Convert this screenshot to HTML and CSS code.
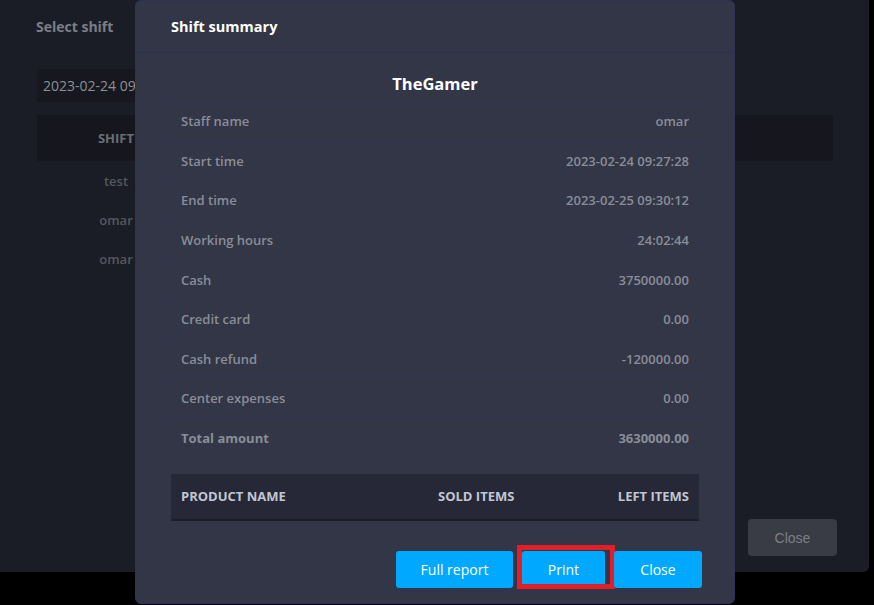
FILE: index.html
```html
<!DOCTYPE html>
<html>
<head>
<meta charset="utf-8">
<link rel="stylesheet" href="styles.css">
</head>
<body>
<div class="page">
  <div class="bg-modal">
    <div class="bg-header">Select shift</div>
    <div class="bg-body">
      <div class="date-input">2023-02-24 09:27:28</div>
      <div class="shift-table">
        <div class="shift-head"><span class="shift-col">SHIFT</span></div>
        <div class="shift-row"><span class="shift-col">test</span></div>
        <div class="shift-row"><span class="shift-col">omar</span></div>
        <div class="shift-row"><span class="shift-col">omar</span></div>
      </div>
    </div>
    <div class="bg-footer"><button class="bg-close">Close</button></div>
  </div>

  <div class="modal">
    <div class="modal-header">Shift summary</div>
    <div class="modal-body">
      <div class="center-name">TheGamer</div>
      <div class="row"><span>Staff name</span><span>omar</span></div>
      <div class="row"><span>Start time</span><span>2023-02-24 09:27:28</span></div>
      <div class="row"><span>End time</span><span>2023-02-25 09:30:12</span></div>
      <div class="row"><span>Working hours</span><span>24:02:44</span></div>
      <div class="row"><span>Cash</span><span>3750000.00</span></div>
      <div class="row"><span>Credit card</span><span>0.00</span></div>
      <div class="row"><span>Cash refund</span><span>-120000.00</span></div>
      <div class="row"><span>Center expenses</span><span>0.00</span></div>
      <div class="row row-total"><span>Total amount</span><span>3630000.00</span></div>
      <div class="products-head">
        <span>PRODUCT NAME</span>
        <span>SOLD ITEMS</span>
        <span class="right">LEFT ITEMS</span>
      </div>
    </div>
    <div class="modal-footer">
      <button class="btn btn-full">Full report</button>
      <button class="btn btn-print">Print<span class="mark"></span></button>
      <button class="btn btn-close">Close</button>
    </div>
  </div>
</div>
</body>
</html>
```

FILE: styles.css
```css
* { box-sizing: border-box; }
html, body {
  margin: 0;
  padding: 0;
  background: #000;
  font-family: "Open Sans", "Noto Sans", sans-serif;
}
.page {
  position: relative;
  width: 874px;
  height: 605px;
  overflow: hidden;
}

/* background modal */
.bg-modal {
  width: 869px;
  height: 572px;
  background: #1b1d26;
  border-radius: 0 0 6px 0;
  display: flex;
  flex-direction: column;
}
.bg-header {
  height: 52px;
  padding: 0 36px;
  display: flex;
  align-items: center;
  font-size: 14px;
  font-weight: 700;
  color: #7c7e86;
}
.bg-body {
  padding: 17px 36px 0 37px;
}
.date-input {
  width: 320px;
  height: 33px;
  background: #16171f;
  color: #8e9096;
  font-size: 14px;
  padding: 0 6px;
  display: flex;
  align-items: center;
}
.shift-table {
  margin-top: 13px;
}
.shift-head {
  height: 46px;
  background: #15161e;
  display: flex;
  align-items: center;
  font-size: 13px;
  font-weight: 700;
  color: #6b6d75;
}
.shift-row {
  height: 39px;
  display: flex;
  align-items: center;
  font-size: 13px;
  font-weight: 600;
  color: #55575e;
}
.shift-col {
  width: 158px;
  text-align: center;
}
.bg-footer {
  margin-top: auto;
  padding: 0 32px 16px;
  display: flex;
  justify-content: flex-end;
}
.bg-close {
  width: 89px;
  height: 37px;
  border: none;
  border-radius: 4px;
  background: #393c45;
  color: #7d7f85;
  font-family: "Liberation Sans", Arial, sans-serif;
  font-size: 14px;
}

/* foreground modal */
.modal {
  position: absolute;
  left: 135px;
  top: 0;
  width: 600px;
  height: 604px;
  background: #323646;
  border: 1px solid #2f3256;
  border-radius: 6px;
  display: flex;
  flex-direction: column;
}
.modal-header {
  height: 52px;
  padding: 0 35px;
  display: flex;
  align-items: center;
  font-size: 14.5px;
  font-weight: 700;
  color: #ffffff;
  border-bottom: 1px solid #2d3052;
}
.modal-body {
  padding: 0 35px;
}
.center-name {
  padding: 19px 0 4px;
  height: 48px;
  line-height: 24px;
  text-align: center;
  font-size: 16.5px;
  font-weight: 700;
  color: #ffffff;
}
.row {
  height: 39.6px;
  border-top: 1px solid #2f3250;
  padding: 0 10px;
  display: flex;
  justify-content: space-between;
  align-items: center;
  font-size: 13px;
  font-weight: 600;
  color: #8a8d98;
}
.row-total {
  font-weight: 700;
}
.products-head {
  margin-top: 16.6px;
  height: 47px;
  background: #262837;
  border-bottom: 2px solid #1c1e29;
  padding: 0 10px;
  display: grid;
  grid-template-columns: 257px 1fr auto;
  align-items: center;
  font-size: 13px;
  font-weight: 700;
  color: #c2c6d2;
}
.products-head .right { text-align: right; }

.modal-footer {
  margin-top: auto;
  padding: 0 32px 15px;
  display: flex;
  justify-content: flex-end;
  gap: 9px;
}
.btn {
  position: relative;
  height: 37px;
  border: none;
  border-radius: 3px;
  background: #00a9ff;
  color: #ffffff;
  font-family: "Open Sans", "Noto Sans", sans-serif;
  font-size: 14px;
  font-weight: 500;
  padding: 0;
}
.btn-full { width: 117px; }
.btn-print { width: 83px; }
.btn-close { width: 88px; }
.mark {
  position: absolute;
  left: -5px;
  top: -6px;
  width: 98px;
  height: 44px;
  border: 5px solid #e31e26;
  pointer-events: none;
}
```
